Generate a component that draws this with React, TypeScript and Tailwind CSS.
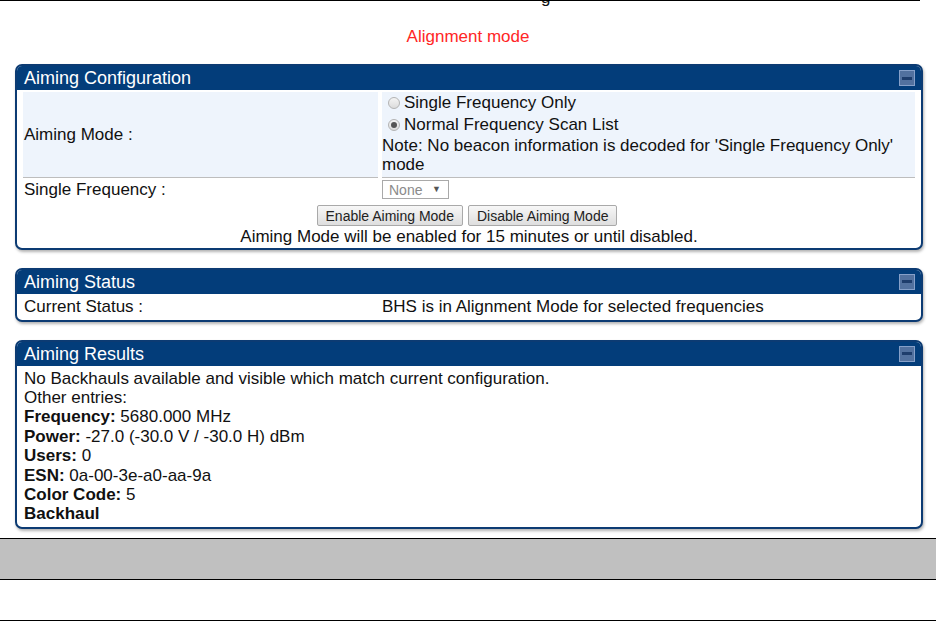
import React from 'react'

const font = { fontFamily: '"Liberation Sans", Arial, sans-serif' }

const MinIcon: React.FC = () => (
  <span className="flex h-[16px] w-[16px] items-center justify-center border border-[#86a0c9] bg-[#52719f]">
    <span className="h-[3px] w-[10px] bg-[#1e3d6c]" />
  </span>
)

const Panel: React.FC<{ title: string; children: React.ReactNode }> = ({ title, children }) => (
  <div className="overflow-hidden rounded-[7px] border-2 border-[#0c3b73] bg-white shadow-[1px_2px_3px_rgba(0,0,0,0.3)]">
    <div className="flex h-[24px] items-center justify-between bg-[#033d7a] pl-[7px] pr-[6px] text-[18px] leading-none text-white">
      <span>{title}</span>
      <MinIcon />
    </div>
    {children}
  </div>
)

const Radio: React.FC<{ checked?: boolean; label: string }> = ({ checked, label }) => (
  <div className="flex h-[22px] items-center">
    <span className="ml-[6px] mr-[4px] flex h-[12px] w-[12px] items-center justify-center rounded-full border border-[#b3b3b3] bg-gradient-to-b from-[#f4f4f4] to-[#dcdcdc]">
      {checked && <span className="h-[6px] w-[6px] rounded-full bg-[#555]" />}
    </span>
    <span>{label}</span>
  </div>
)

const Btn: React.FC<{ label: string }> = ({ label }) => (
  <button className="h-[21px] rounded-[2px] border border-[#a9a9a9] bg-gradient-to-b from-[#f7f7f7] to-[#dedede] px-[8px] text-[14px] leading-none text-[#222]">
    {label}
  </button>
)

export default function App() {
  return (
    <div className="h-[621px] w-[936px] overflow-hidden bg-white text-[17px] leading-[19.5px] text-[#111]" style={font}>
      <div className="h-[10px] w-[920px] overflow-hidden border-t border-black">
        <div className="-mt-[12px] pl-[541px] text-[17px] leading-[17px]">g</div>
      </div>
      <div className="mt-[17px] text-center leading-[20px] text-[#ff2626]">Alignment mode</div>

      <div className="ml-[15px] mt-[17px] flex w-[908px] flex-col gap-[18px]">
        <Panel title="Aiming Configuration">
          <div className="grid grid-cols-[355px_1fr] gap-x-[4px] px-[6px] pt-[2px] pb-[1px]">
            <div className="flex items-center border-b border-[#bdbdbd] bg-[#eef4fc] pl-[1px]">Aiming Mode :</div>
            <div className="border-b border-[#bdbdbd] bg-[#eef4fc] pb-[3px]">
              <Radio label="Single Frequency Only" />
              <Radio checked label="Normal Frequency Scan List" />
              <div className="leading-[19px]">Note: No beacon information is decoded for 'Single Frequency Only' mode</div>
            </div>
            <div className="flex items-center pl-[1px]">Single Frequency :</div>
            <div className="pt-[2px] pb-[2px]">
              <div className="flex h-[19px] w-[67px] items-center justify-between border border-[#a9a9a9] bg-white pl-[6px] pr-[7px] text-[14px] leading-none text-[#8a8a8a]">
                <span>None</span>
                <span className="text-[9px] text-[#555]">▼</span>
              </div>
            </div>
            <div className="col-span-2 mt-[4px] flex justify-center gap-[5px] pr-[4px]">
              <Btn label="Enable Aiming Mode" />
              <Btn label="Disable Aiming Mode" />
            </div>
            <div className="col-span-2 mt-[1px] text-center">Aiming Mode will be enabled for 15 minutes or until disabled.</div>
          </div>
        </Panel>

        <Panel title="Aiming Status">
          <div className="grid h-[26px] grid-cols-[355px_1fr] gap-x-[4px] px-[6px] py-[3px]">
            <div className="pl-[1px]">Current Status :</div>
            <div>BHS is in Alignment Mode for selected frequencies</div>
          </div>
        </Panel>

        <Panel title="Aiming Results">
          <div className="px-[7px] py-[3px] leading-[19.4px]">
            <div>No Backhauls available and visible which match current configuration.</div>
            <div>Other entries:</div>
            <div><b>Frequency:</b> 5680.000 MHz</div>
            <div><b>Power:</b> -27.0 (-30.0 V / -30.0 H) dBm</div>
            <div><b>Users:</b> 0</div>
            <div><b>ESN:</b> 0a-00-3e-a0-aa-9a</div>
            <div><b>Color Code:</b> 5</div>
            <div><b>Backhaul</b></div>
          </div>
        </Panel>
      </div>

      <div className="mt-[9px] h-[42px] border-y border-black bg-[#c0c0c0]" />
      <div className="h-[41px] border-b border-black" />
    </div>
  )
}
